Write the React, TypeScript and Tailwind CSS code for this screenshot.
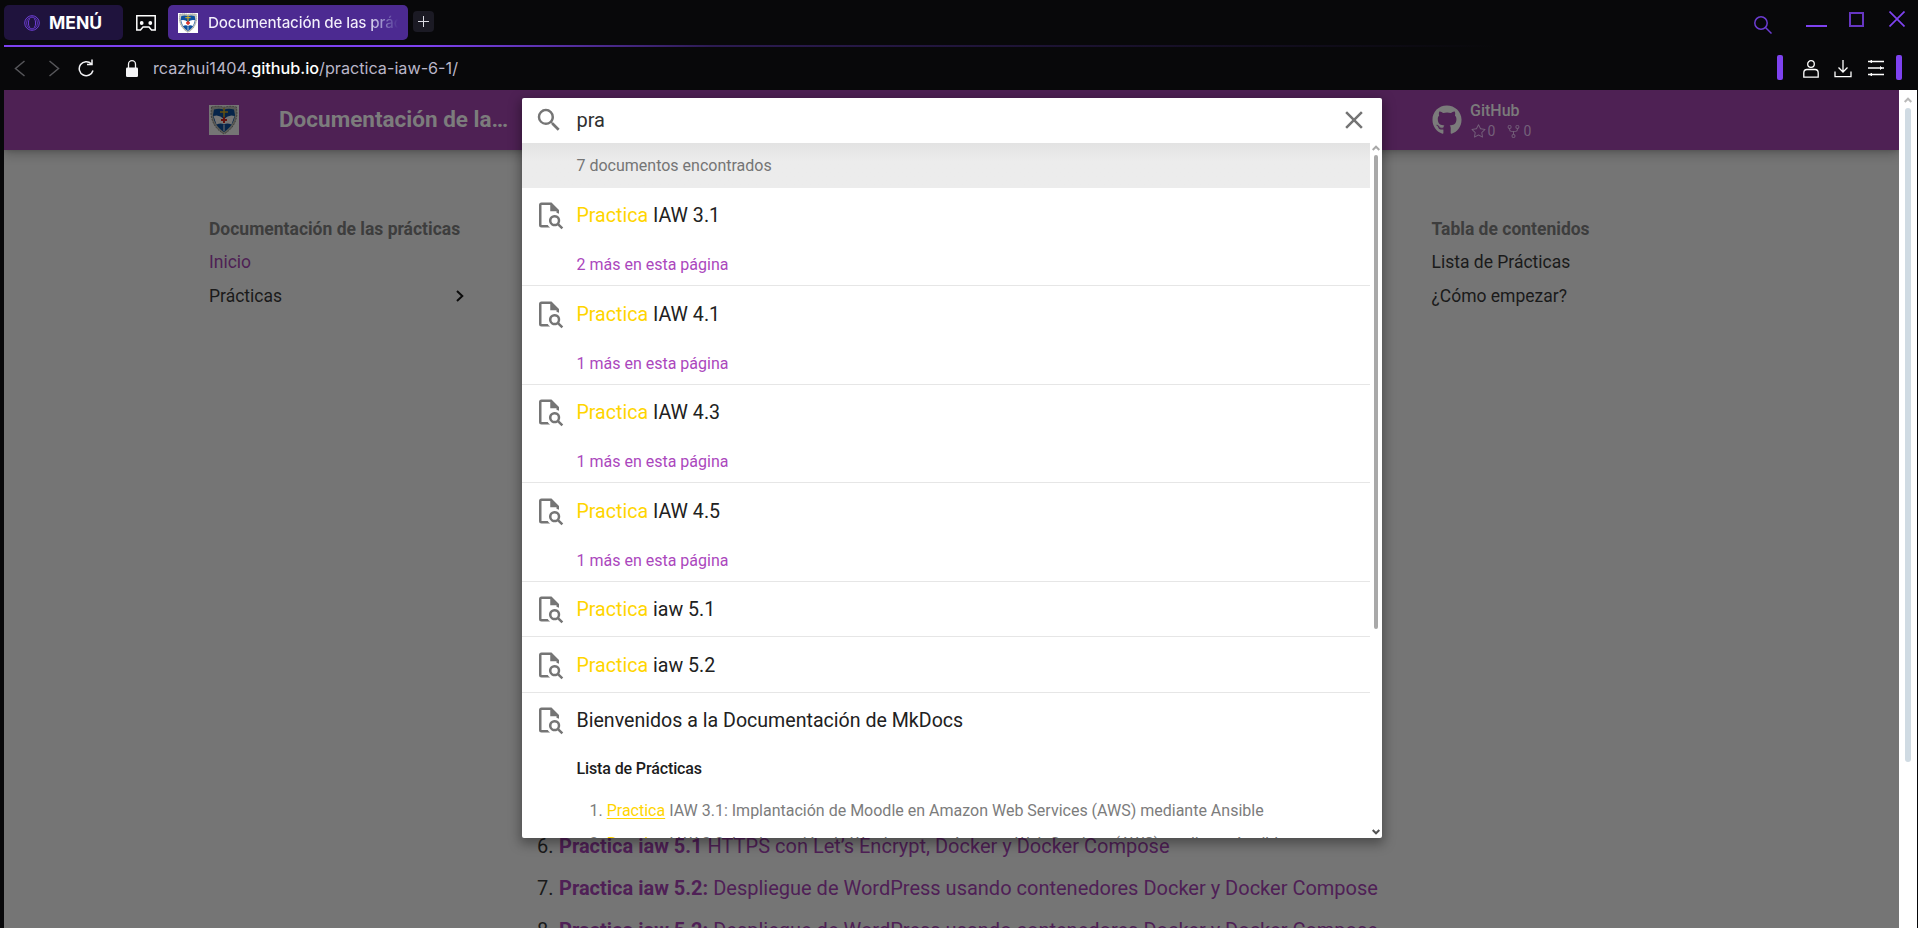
import React from "react";
import { FaGithub } from "react-icons/fa";
import { GoStar, GoRepoForked } from "react-icons/go";

function Crest({ className }: { className: string }) {
  return (
    <svg viewBox="0 0 30 30" className={className}>
      <rect width="30" height="30" fill="#fff" />
      <path d="M2.500 2Q9 .5 15 2.200 21 .5 27.500 2L28 9C27 19 22 25 15 29 8 25 3 19 2 9Z" fill="#c4c4bb" stroke="#77776f" strokeWidth=".8" strokeDasharray="2 1" />
      <path d="M5 4.500Q10 3 15 4.500 20 3 25 4.500L26 10C25 18 21 23 15 27 9 23 5 18 4 10Z" fill="#0c4f9e" />
      <path d="M4.500 11Q10 9 15 14 20 9 25.500 11L22.500 19.500Q18 17.500 15 19.500 12 17.500 7.500 19.500Z" fill="#fff" />
      <path d="M15 3V12M11 7H19" stroke="#d8b020" strokeWidth="1.500" />
      <path d="M15 12V18M12 15H18" stroke="#d8281e" strokeWidth="2" />
      <path d="M15 20V26" stroke="#d5dde8" strokeWidth="1.200" />
    </svg>
  );
}

function FileSearch() {
  return (
    <svg viewBox="0 0 24 24" className="size-[30px] shrink-0" fill="#757575">
      <path d="M14 2H6a2 2 0 0 0-2 2v16a2 2 0 0 0 2 2h7c-.41-.25-.8-.56-1.14-.9-.33-.33-.61-.7-.86-1.1H6V4h7v5h5v1.180c.71.16 1.390.43 2 .82V8l-6-6m6.310 16.900c1.330-2.110.69-4.900-1.400-6.220-2.110-1.330-4.910-.68-6.220 1.400-1.340 2.110-.69 4.890 1.400 6.220 1.460.93 3.320.93 4.790.02L22 23.390 23.390 22l-3.080-3.100m-3.810.1a2.500 2.500 0 0 1-2.500-2.500 2.500 2.500 0 0 1 2.500-2.500 2.500 2.500 0 0 1 2.500 2.500 2.500 2.500 0 0 1-2.500 2.500Z" />
    </svg>
  );
}

function TabBar() {
  return (
    <div className="flex h-[45px] items-start pl-1 font-[Inter,sans-serif]">
      <div className="mt-[5px] flex h-[35px] w-[119px] items-center rounded-[5px] bg-[#1f133d] pl-5">
        <svg viewBox="0 0 16 16" className="size-4" fill="none" stroke="#6f3fd8">
          <circle cx="8" cy="8" r="7.300" strokeWidth="1" />
          <ellipse cx="8" cy="8" rx="3.600" ry="6" strokeWidth="1" />
          <path d="M5.500 2.500Q2.500 4 2.500 8T5.500 13.500M10.500 2.500Q13.500 4 13.500 8T10.500 13.500" strokeWidth=".7" />
        </svg>
        <span className="mt-px ml-[9px] text-[17.500px] font-bold text-white">MENÚ</span>
      </div>
      <svg viewBox="0 0 20 16" className="mt-[15px] ml-[13px] h-4 w-5" fill="none" stroke="#fff" strokeWidth="1.500">
        <path d="M.8.8H19.200V15H15.500L13 12H7L4.500 15H.8Z" />
        <circle cx="5.700" cy="8" r="1.900" fill="#fff" stroke="none" />
        <circle cx="14.300" cy="8" r="1.900" fill="#fff" stroke="none" />
      </svg>
      <div className="mt-[5px] ml-3 flex h-[35px] w-[240px] items-center rounded-[5px] bg-[#4c2a91] pl-[10px]">
        <Crest className="size-5" />
        <div className="mt-px ml-[10px] w-[190px] overflow-hidden bg-linear-to-r from-[#f3effb] from-84% to-[#4c2a91] bg-clip-text text-[15.200px] font-medium tracking-[-0.150px] whitespace-nowrap text-transparent">
          Documentación de las prácticas
        </div>
      </div>
      <div className="mt-[11px] ml-[5px] flex size-[21px] items-center justify-center rounded-[4px] bg-[#1b1a24]">
        <svg viewBox="0 0 11 11" className="size-[11px]" stroke="#dcdce4" strokeWidth="1">
          <path d="M5.500 0V11M0 5.500H11" />
        </svg>
      </div>
      <div className="mr-[25px] ml-auto flex items-start">
        <svg viewBox="0 0 18 18" className="mt-4 size-[18px]" fill="none" stroke="#6c3cd2" strokeWidth="1.500">
          <circle cx="7" cy="7" r="6.200" />
          <path d="M11.500 11.500L17.500 17.500" />
        </svg>
        <div className="mt-[25px] ml-[34px] h-[2px] w-[21px] bg-[#7e42f0]" />
        <div className="mt-3 ml-[22px] size-[15px] border-2 border-[#7e42f0]/80" />
      </div>
      <svg viewBox="0 0 16 16" className="mt-[11px] mr-[13px] size-4" fill="none" stroke="#7e42f0" strokeWidth="1.700">
        <path d="M.5.5L15.500 15.500M15.500.5L.5 15.500" />
      </svg>
    </div>
  );
}

function AddressBar() {
  return (
    <div className="flex h-[43px] items-center pl-[14px] font-[Inter,sans-serif]">
      <svg viewBox="0 0 11 17" className="-mt-px h-[17px] w-[11px]" fill="none" stroke="#56565a" strokeWidth="1.500">
        <path d="M10.500 1L1.500 8.500L10.500 16" />
      </svg>
      <svg viewBox="0 0 11 17" className="-mt-px ml-6 h-[17px] w-[11px]" fill="none" stroke="#56565a" strokeWidth="1.500">
        <path d="M.5 1L9.500 8.500L.5 16" />
      </svg>
      <svg viewBox="0 0 17 18" className="-mt-[2px] ml-[18px] h-[18px] w-[17px]" fill="none" stroke="#f2f2f5" strokeWidth="1.500">
        <path d="M15 11.500A7 7 0 1 1 13.300 4.800M14 .5V5.500H9" />
      </svg>
      <svg viewBox="0 0 12 17" className="-mt-px ml-[31px] h-[17px] w-3">
        <path d="M2.500 8V4.200A3.500 3.500 0 0 1 9.500 4.200V8" fill="none" stroke="#f4f4f6" strokeWidth="1.300" />
        <rect y="7.500" width="12" height="9.500" rx="1.300" fill="#f4f4f6" />
      </svg>
      <div className="-mt-px ml-[15px] text-[16.200px] whitespace-nowrap text-[#bab6c8]">
        rcazhui1404.<span className="font-medium text-white">github.io</span>/practica-iaw-6-1/
      </div>
      <div className="mr-4 ml-auto flex items-center">
        <div className="-mt-[3px] h-[25px] w-[6px] rounded-[2px] bg-[#7e42f0]" />
        <svg viewBox="0 0 16 18" className="ml-5 h-[18px] w-4" fill="none" stroke="#fff" strokeWidth="1.300">
          <circle cx="8" cy="4" r="3.300" />
          <path d="M.8 17.200V13Q.8 9.500 4 9.500H12Q15.200 9.500 15.200 13V17.200Z" />
        </svg>
        <svg viewBox="0 0 18 18" className="ml-[15px] size-[18px]" fill="none" stroke="#fff" strokeWidth="1.300">
          <path d="M9 0V12M4.500 7.500L9 12L13.500 7.500M1 11.500V16.700H17V11.500" />
        </svg>
        <svg viewBox="0 0 16 18" className="-mt-px ml-4 h-[18px] w-4" fill="#fff" stroke="#fff" strokeWidth="1.300">
          <path d="M0 2.500H16M0 9H16M0 15.500H16" />
          <path d="M3 1V4L4.500 2.500ZM12.500 7.500V10.500L14 9ZM3 14V17L4.500 15.500Z" strokeWidth=".8" />
        </svg>
        <div className="-mt-[3px] ml-3 h-[25px] w-[6px] rounded-[2px] bg-[#7e42f0]" />
      </div>
    </div>
  );
}

const results = [
  { rest: "IAW 3.1", more: "2 más en esta página" },
  { rest: "IAW 4.1", more: "1 más en esta página" },
  { rest: "IAW 4.3", more: "1 más en esta página" },
  { rest: "IAW 4.5", more: "1 más en esta página" },
  { rest: "iaw 5.1" },
  { rest: "iaw 5.2" },
];

function SearchModal() {
  return (
    <div className="absolute top-2 left-[518px] flex h-[740px] w-[860px] flex-col overflow-hidden rounded-[2px] bg-white shadow-[0_4px_12px_2px_rgba(0,0,0,0.35)]">
      <div className="flex h-[45px] shrink-0 items-center pl-3">
        <svg viewBox="0 0 24 24" className="-mt-px size-[30px]" fill="#757575">
          <path d="M9.500 3A6.500 6.500 0 0 1 16 9.500c0 1.610-.59 3.090-1.560 4.230l.27.27h.79l5 5-1.500 1.500-5-5v-.79l-.27-.27A6.516 6.516 0 0 1 9.500 16 6.500 6.500 0 0 1 3 9.500 6.500 6.500 0 0 1 9.500 3m0 2C7 5 5 7 5 9.500S7 14 9.500 14 14 12 14 9.500 12 5 9.500 5Z" />
        </svg>
        <span className="-mt-[2px] ml-[12.500px] text-[20px] text-[#303030]">pra</span>
        <svg viewBox="0 0 24 24" className="-mt-px mr-[13px] ml-auto size-[30px]" fill="#757575">
          <path d="M19 6.410 17.590 5 12 10.590 6.410 5 5 6.410 10.590 12 5 17.590 6.410 19 12 13.410 17.590 19 19 17.590 13.410 12z" />
        </svg>
      </div>
      <div className="flex min-h-0 flex-1">
        <div className="flex min-w-0 flex-1 flex-col overflow-hidden">
          <div className="h-[44.800px] shrink-0 bg-[#ececec] bg-linear-to-b from-[#e3e3e3] to-[#ececec] to-40% pl-[54.500px] text-[16px] leading-[45px] text-[#757575]">
            7 documentos encontrados
          </div>
          {results.map((r) => (
            <div key={r.rest} className="shrink-0 border-b border-[#e6e6e6]">
              <div className="flex h-[54.500px] items-center pl-3 text-[19.600px]">
                <FileSearch />
                <div className="ml-[12.500px] pt-[1.500px] text-[#212121]">
                  <span className="text-[#ffd500]">Practica</span> {r.rest}
                </div>
              </div>
              {r.more && (
                <div className="h-[43px] pl-[54.500px] text-[16px] leading-[45px] text-[#ab47bd]">{r.more}</div>
              )}
            </div>
          ))}
          <div className="flex h-[54.600px] shrink-0 items-center pl-3 text-[19.600px] text-[#212121]">
            <FileSearch />
            <span className="ml-[12.500px] pt-[1.500px]">Bienvenidos a la Documentación de MkDocs</span>
          </div>
          <div className="h-10 shrink-0 pl-[54.500px] text-[16px] leading-[43.500px] font-medium tracking-[-0.120px] text-[#1c1c1c]">Lista de Prácticas</div>
          <div className="h-[174px] pt-[8.500px] pl-[67.500px] text-[16px] leading-[30px] text-[#7c7c7c]">
            <div className="h-[33px] whitespace-nowrap">
              1. <span className="text-[#ffd500] underline underline-offset-2">Practica</span> IAW 3.1: Implantación de Moodle en Amazon Web Services (AWS) mediante Ansible
            </div>
            <div className="h-[33px] whitespace-nowrap">
              2. <span className="text-[#ffd500] underline underline-offset-2">Practica</span> IAW 3.2: Implantación de Wordpress en Amazon Web Services (AWS) mediante Ansible
            </div>
          </div>
        </div>
        <div className="flex w-3 flex-col items-center">
          <svg viewBox="0 0 8 6" className="mt-[2px] ml-[-1px] h-[6px] w-2" fill="none" stroke="#a9a9a9" strokeWidth="2">
            <path d="M.7 5L4 1.700L7.300 5" />
          </svg>
          <div className="mt-1 h-[474px] w-1 rounded-full bg-[#a9a9a9]" />
          <svg viewBox="0 0 8 6" className="mt-auto mb-[3px] ml-[-1px] h-[6px] w-2" fill="none" stroke="#555" strokeWidth="2">
            <path d="M.7 1L4 4.300L7.300 1" />
          </svg>
        </div>
      </div>
    </div>
  );
}

const practices = [
  { n: "6.", name: "Practica iaw 5.1", text: " HTTPS con Let’s Encrypt, Docker y Docker Compose" },
  { n: "7.", name: "Practica iaw 5.2:", text: " Despliegue de WordPress usando contenedores Docker y Docker Compose" },
  { n: "8.", name: "Practica iaw 5.2:", text: " Despliegue de WordPress usando contenedores Docker y Docker Compose" },
];

function SitePage() {
  return (
    <div className="flex min-w-0 flex-1 flex-col overflow-hidden bg-[#757575]">
      <div className="z-10 flex h-[60px] shrink-0 items-center bg-[#4e2154] pl-[205px] text-[#7b7b7b] shadow-[0_0_5px_rgba(0,0,0,0.2),0_5px_10px_rgba(0,0,0,0.2)]">
        <Crest className="size-[30px] brightness-[.46]" />
        <div className="-mt-[2px] ml-10 w-[240px] text-[22.500px] leading-[58px] font-bold whitespace-nowrap text-[#7c7c7c]">Documentación de la…</div>
        <FaGithub className="ml-[913px] size-[30px] shrink-0 text-[#7b7b7b]" />
        <div className="mt-[2px] ml-2">
          <div className="text-[16px] leading-5 font-medium">GitHub</div>
          <div className="flex h-5 items-center text-[14px] leading-5 text-[#74607a]">
            <GoStar className="ml-px size-[15px]" />
            <span className="ml-[1.500px]">0</span>
            <GoRepoForked className="ml-[11px] size-[15px]" />
            <span className="ml-[2px]">0</span>
          </div>
        </div>
      </div>
      <div className="flex min-h-0 flex-1 pl-[205px] text-[17.500px] leading-[24px] text-[#1a1a1a]">
        <div className="w-[265px] pt-[67px]">
          <div className="h-[33px] font-bold text-[#3d3d3d]">Documentación de las prácticas</div>
          <div className="h-[34px] text-[#4e2154]">Inicio</div>
          <div className="flex items-center justify-between">
            <span>Prácticas</span>
            <svg viewBox="0 0 8 12" className="mr-[10px] h-3 w-2" fill="none" stroke="#0c0c0c" strokeWidth="2">
              <path d="M1 1L6.300 6L1 11" />
            </svg>
          </div>
        </div>
        <div className="ml-[63px] w-[894.500px] overflow-hidden pt-[675px] text-[20px]">
          {practices.map((p) => (
            <div key={p.n} className="flex h-[42px] items-center whitespace-nowrap">
              <span className="w-[22px]">{p.n}</span>
              <span className="whitespace-pre text-[#4f2056]">
                <b className="font-bold">{p.name}</b>
                {p.text}
              </span>
            </div>
          ))}
        </div>
        <div className="pt-[67px]">
          <div className="h-[33px] font-bold text-[#3d3d3d]">Tabla de contenidos</div>
          <div className="h-[34px]">Lista de Prácticas</div>
          <div>¿Cómo empezar?</div>
        </div>
      </div>
    </div>
  );
}

export default function App() {
  return (
    <div className="flex h-[928px] w-[1918px] flex-col overflow-hidden bg-[#08080a]">
      <TabBar />
      <div className="ml-1 h-[2px] shrink-0 bg-[linear-gradient(to_right,#7e42f0_22%,#2c1b52_37%,#08080a_78%)]" />
      <AddressBar />
      <div className="relative ml-1 flex min-h-0 flex-1 font-[Roboto,sans-serif]">
        <SitePage />
        <div className="mr-px flex w-[18px] shrink-0 flex-col items-center bg-white">
          <svg viewBox="0 0 8 6" className="mt-[7px] h-[6px] w-2" fill="none" stroke="#b9b9b9" strokeWidth="2">
            <path d="M.7 5L4 1.700L7.300 5" />
          </svg>
          <div className="mt-[5px] h-[654px] w-[6px] rounded-full bg-[#d0dbe3]" />
        </div>
        <div className="absolute inset-0 z-20 overflow-hidden">
          <SearchModal />
        </div>
      </div>
    </div>
  );
}
